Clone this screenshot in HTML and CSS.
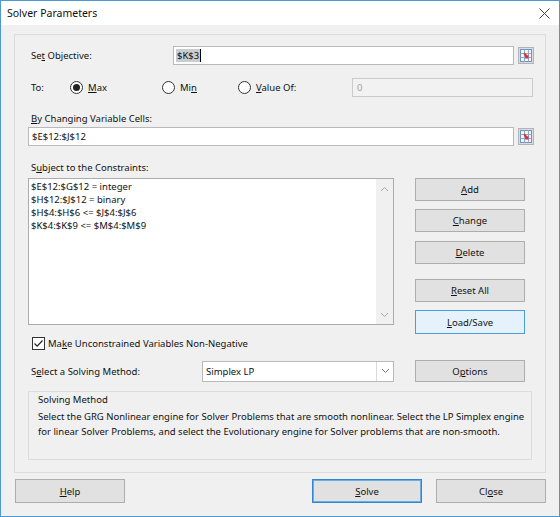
FILE: index.html
```html
<!DOCTYPE html>
<html lang="en">
<head>
  <meta charset="UTF-8" />
  <title>Solver Parameters</title>
  <link rel="stylesheet" href="styles.css">
</head>
<body>
  <div class="window">
    <div class="titlebar">
      <span class="title">Solver Parameters</span>
      <svg class="close-x" width="11" height="11" viewBox="0 0 11 11">
        <path d="M0.5 0.5 L10.5 10.5 M10.5 0.5 L0.5 10.5" stroke="#444" stroke-width="1" fill="none"/>
      </svg>
    </div>

    <div class="dialog">
      <div class="frame">
        <div class="row objective-row">
          <span class="lbl obj-lbl">Se<u>t</u> Objective:</span>
          <div class="input obj-input"><span class="sel">$K$3</span><span class="caret"></span></div>
          <button class="refbtn">
            <svg width="12" height="13" viewBox="0 0 12 13">
              <rect x="0.5" y="0.5" width="11" height="12" fill="#f3f7fc" stroke="#6d93c9"/>
              <path d="M0.5 4.5 H11.5 M0.5 8.5 H11.5 M4.5 0.5 V12.5 M8.5 0.5 V12.5" stroke="#8aa9d6"/>
              <path d="M3.5 4.5 L4.5 3.5 L7.5 6.5 L8.5 5.5 L8.5 9.5 L4.5 9.5 L5.5 8.5 Z" fill="#d9342b"/>
            </svg>
          </button>
        </div>

        <div class="row to-row">
          <span class="lbl to-lbl">To:</span>
          <span class="radio r-max"><span class="dot on"></span><span><u>M</u>ax</span></span>
          <span class="radio r-min"><span class="dot"></span><span>Mi<u>n</u></span></span>
          <span class="radio r-val"><span class="dot"></span><span><u>V</u>alue Of:</span></span>
          <div class="input value-input">0</div>
        </div>

        <div class="lbl by-lbl"><u>B</u>y Changing Variable Cells:</div>
        <div class="row var-row">
          <div class="input var-input">$E$12:$J$12</div>
          <button class="refbtn">
            <svg width="12" height="13" viewBox="0 0 12 13">
              <rect x="0.5" y="0.5" width="11" height="12" fill="#f3f7fc" stroke="#6d93c9"/>
              <path d="M0.5 4.5 H11.5 M0.5 8.5 H11.5 M4.5 0.5 V12.5 M8.5 0.5 V12.5" stroke="#8aa9d6"/>
              <path d="M3.5 4.5 L4.5 3.5 L7.5 6.5 L8.5 5.5 L8.5 9.5 L4.5 9.5 L5.5 8.5 Z" fill="#d9342b"/>
            </svg>
          </button>
        </div>

        <div class="lbl subj-lbl">S<u>u</u>bject to the Constraints:</div>
        <div class="constraints">
          <div class="listbox">
            <div class="items">
              <div>$E$12:$G$12 = integer</div>
              <div>$H$12:$J$12 = binary</div>
              <div>$H$4:$H$6 &lt;= $J$4:$J$6</div>
              <div>$K$4:$K$9 &lt;= $M$4:$M$9</div>
            </div>
            <div class="scrollbar">
              <svg width="9" height="6" viewBox="0 0 9 6"><path d="M1 5 L4.5 1.5 L8 5" stroke="#a6a6a6" fill="none"/></svg>
              <svg width="9" height="6" viewBox="0 0 9 6"><path d="M1 1 L4.5 4.5 L8 1" stroke="#a6a6a6" fill="none"/></svg>
            </div>
          </div>
          <div class="side-buttons">
            <button class="btn"><u>A</u>dd</button>
            <button class="btn"><u>C</u>hange</button>
            <button class="btn delete"><u>D</u>elete</button>
            <button class="btn reset"><u>R</u>eset All</button>
            <button class="btn load"><u>L</u>oad/Save</button>
          </div>
        </div>

        <div class="check-row">
          <span class="checkbox">
            <svg width="11" height="11" viewBox="0 0 11 11"><path d="M1.5 5.5 L4.2 8.2 L9.5 2.5" stroke="#222" stroke-width="1.2" fill="none"/></svg>
          </span>
          <span>Ma<u>k</u>e Unconstrained Variables Non-Negative</span>
        </div>

        <div class="row method-row">
          <span class="lbl method-lbl">S<u>e</u>lect a Solving Method:</span>
          <div class="select">
            <span class="select-value">Simplex LP</span>
            <span class="select-arrow">
              <svg width="9" height="6" viewBox="0 0 9 6"><path d="M1 1 L4.5 4.5 L8 1" stroke="#777" fill="none"/></svg>
            </span>
          </div>
          <button class="btn options">O<u>p</u>tions</button>
        </div>

        <div class="group">
          <div class="group-title">Solving Method</div>
          <div class="group-text">Select the GRG Nonlinear engine for Solver Problems that are smooth nonlinear. Select the LP Simplex engine<br>for linear Solver Problems, and select the Evolutionary engine for Solver problems that are non-smooth.</div>
        </div>
      </div>

      <div class="footer">
        <button class="btn"><u>H</u>elp</button>
        <div class="footer-right">
          <button class="btn solve"><u>S</u>olve</button>
          <button class="btn">Cl<u>o</u>se</button>
        </div>
      </div>
    </div>
  </div>
</body>
</html>
```

FILE: styles.css
```css
* {
  box-sizing: border-box;
}

body {
  margin: 0;
  font-family: 'Noto Sans', 'Open Sans', sans-serif;
  font-size: 9.5px;
  color: #111;
  background: #fff;
}

u {
  text-decoration: underline;
  text-underline-offset: 1px;
}

.window {
  width: 560px;
  height: 517px;
  border: 1px solid #4a98d4;
  display: flex;
  flex-direction: column;
  background: #f0f0f0;
}

.titlebar {
  height: 24px;
  background: #fff;
  display: flex;
  align-items: center;
  justify-content: space-between;
  padding: 0 9px 0 6px;
}

.title {
  font-size: 10.5px;
}

.dialog {
  flex: 1;
  padding: 9px 13px 0 13px;
}

.frame {
  height: 439px;
  border: 1px solid #dcdcdc;
  padding: 11px 0 0 13px;
}

.row {
  display: flex;
  align-items: center;
}

.lbl {
  padding-left: 3px;
  line-height: 15px;
}

.input {
  height: 19px;
  background: #fff;
  border: 1px solid #b9b9b9;
  padding: 0 4px;
  display: flex;
  align-items: center;
  white-space: nowrap;
}

.refbtn {
  width: 16px;
  height: 17px;
  margin-left: 4px;
  padding: 0;
  background: #dcdcdc;
  border: 1px solid #b4b4b4;
  display: flex;
  align-items: center;
  justify-content: center;
}

/* objective */
.objective-row {
  height: 19px;
}

.obj-lbl {
  width: 145px;
}

.obj-input {
  width: 341px;
  padding-left: 2px;
}

.sel {
  background: #c9cdd2;
  padding: 0 1px;
}

.caret {
  width: 1px;
  height: 13px;
  background: #000;
}

/* to row */
.to-row {
  margin-top: 13px;
  height: 19px;
}

.to-lbl {
  width: 42px;
}

.radio {
  display: flex;
  align-items: center;
  gap: 5px;
}

.r-max { width: 92px; }
.r-min { width: 76px; }
.r-val { width: 114px; }

.dot {
  width: 13px;
  height: 13px;
  border: 1px solid #333;
  border-radius: 50%;
  background: #fff;
  display: flex;
  align-items: center;
  justify-content: center;
}

.dot.on::after {
  content: "";
  width: 7px;
  height: 7px;
  border-radius: 50%;
  background: #222;
}

.value-input {
  width: 181px;
  background: #f2f2f2;
  border-color: #cbcbcb;
  color: #a0a0a0;
}

/* changing cells */
.by-lbl {
  margin-top: 14px;
  height: 15px;
}

.var-row {
  margin-top: 1px;
  height: 19px;
}

.var-input {
  width: 486px;
  padding-left: 3px;
}

.subj-lbl {
  margin-top: 14px;
  height: 15px;
}

/* constraints */
.constraints {
  margin-top: 3px;
  display: flex;
  align-items: flex-start;
  gap: 21px;
}

.listbox {
  width: 366px;
  height: 147px;
  background: #fff;
  border: 1px solid #acacac;
  display: flex;
  justify-content: space-between;
}

.items {
  padding: 1px 2px;
  line-height: 13px;
}

.scrollbar {
  width: 17px;
  background: #f0f0f0;
  display: flex;
  flex-direction: column;
  align-items: center;
  justify-content: space-between;
  padding: 7px 0 6px;
}

.side-buttons {
  display: flex;
  flex-direction: column;
  gap: 8px;
}

.btn {
  width: 110px;
  height: 23px;
  font-family: inherit;
  font-size: 9.5px;
  color: #111;
  background: #e1e1e1;
  border: 1px solid #adadad;
  padding: 0;
}

.side-buttons .delete {
  margin-top: 1px;
}

.side-buttons .reset {
  margin-top: 7px;
}

.side-buttons .load {
  height: 24px;
  background: #e5f1fb;
  border-color: #4b9ddd;
}

/* checkbox */
.check-row {
  margin-top: 3px;
  height: 13px;
  display: flex;
  align-items: center;
  padding-left: 4px;
  line-height: 13px;
}

.checkbox {
  width: 13px;
  height: 13px;
  border: 1px solid #333;
  background: #fff;
  margin-right: 3px;
  display: flex;
  align-items: center;
  justify-content: center;
}

/* method */
.method-row {
  margin-top: 10px;
  height: 22px;
}

.method-lbl {
  width: 174px;
}

.select {
  width: 192px;
  height: 21px;
  background: #fff;
  border: 1px solid #b9b9b9;
  display: flex;
  align-items: center;
  justify-content: space-between;
}

.select-value {
  padding-left: 3px;
}

.select-arrow {
  width: 17px;
  height: 100%;
  border-left: 1px solid #dadada;
  display: flex;
  align-items: center;
  justify-content: center;
}

.options {
  margin-left: 21px;
  height: 22px;
}

/* solving method group */
.group {
  margin-top: 9px;
  width: 504px;
  height: 69px;
  border: 1px solid #dcdcdc;
  padding: 0 0 0 9px;
}

.group-title {
  line-height: 15px;
}

.group-text {
  margin-top: 2px;
  line-height: 15px;
  white-space: nowrap;
}

/* footer */
.footer {
  margin-top: 6px;
  padding-left: 1px;
  display: flex;
  justify-content: space-between;
}

.footer .btn {
  height: 24px;
}

.footer-right {
  display: flex;
  gap: 14px;
}

.footer .solve {
  border-color: #2f86d3;
  box-shadow: inset 0 0 0 1px #6aaee4;
}
```
